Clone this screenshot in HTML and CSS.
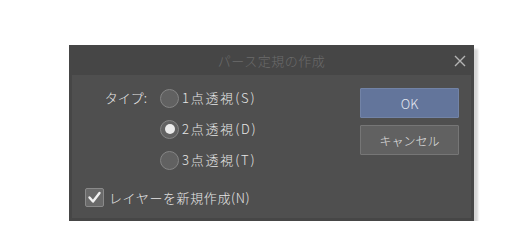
FILE: index.html
```html
<!DOCTYPE html>
<html lang="ja">
<head>
<meta charset="utf-8">
<link rel="stylesheet" href="styles.css">
</head>
<body>
<div class="dialog">
  <div class="titlebar">
    <span class="title">パース定規の作成</span>
    <svg class="close" width="12" height="12" viewBox="0 0 12 12"><path d="M1 1 L11 11 M11 1 L1 11" stroke="#b4b4b4" stroke-width="1.4" fill="none"/></svg>
  </div>
  <div class="content">
    <div class="left">
      <div class="typerow">
        <div class="typelabel">タイプ:</div>
        <div class="radios">
          <div class="radio"><span class="circle"></span><span class="rlabel">1点透視(S)</span></div>
          <div class="radio"><span class="circle checked"></span><span class="rlabel">2点透視(D)</span></div>
          <div class="radio"><span class="circle"></span><span class="rlabel">3点透視(T)</span></div>
        </div>
      </div>
      <div class="check">
        <span class="box"><svg width="15" height="15" viewBox="0 0 15 15"><path d="M2.5 7.5 L6 11.5 L12.5 3" stroke="#f2f2f2" stroke-width="2.4" fill="none" stroke-linecap="round" stroke-linejoin="round"/></svg></span>
        <span class="clabel">レイヤーを新規作成(N)</span>
      </div>
    </div>
    <div class="buttons">
      <div class="btn ok">OK</div>
      <div class="btn cancel">キャンセル</div>
    </div>
  </div>
</div>
</body>
</html>
```
FILE: styles.css
```css
html, body {
  margin: 0;
  padding: 0;
  background: #ffffff;
}
body {
  font-family: "Noto Sans CJK JP", "Noto Sans", sans-serif;
  font-size: 13px;
  font-weight: 300;
  color: #e6e6e6;
}
.dialog {
  margin: 45px 0 0 69px;
  width: 405px;
  height: 176px;
  background: #464646;
  box-shadow: 4px 4px 2px rgba(0,0,0,0.16);
  display: flex;
  flex-direction: column;
}
.titlebar {
  height: 30px;
  flex: none;
  display: flex;
  align-items: center;
  justify-content: center;
  position: relative;
}
.title {
  color: #6b6b6b;
  font-size: 13px;
  letter-spacing: 0.5px;
}
.close {
  position: absolute;
  right: 8px;
  top: 10px;
}
.content {
  flex: 1;
  margin: 0 3px 3px 3px;
  background: #4f4f4f;
  display: flex;
  justify-content: space-between;
  padding: 13px 12px 0 13px;
}
.left {
  display: flex;
  flex-direction: column;
}
.typerow {
  display: flex;
}
.typelabel {
  width: 62px;
  padding-right: 13px;
  text-align: right;
  height: 20px;
  line-height: 20px;
}
.radios {
  display: flex;
  flex-direction: column;
  gap: 11px;
}
.radio {
  display: flex;
  align-items: center;
  gap: 3px;
  height: 20px;
}
.circle {
  width: 17px;
  height: 17px;
  border-radius: 50%;
  border: 1.5px solid #858585;
  background: #616161;
  display: flex;
  align-items: center;
  justify-content: center;
}
.circle.checked::after {
  content: "";
  width: 10px;
  height: 10px;
  border-radius: 50%;
  background: #ebebeb;
}
.rlabel {
  letter-spacing: 1.8px;
  line-height: 20px;
}
.check {
  margin-top: 18px;
  display: flex;
  align-items: center;
  gap: 5px;
}
.box {
  width: 17px;
  height: 17px;
  border: 1px solid #8a8a8a;
  background: #6a6a6a;
  border-radius: 2px;
  display: flex;
  align-items: center;
  justify-content: center;
}
.clabel {
  letter-spacing: 0.6px;
}
.buttons {
  display: flex;
  flex-direction: column;
  gap: 7px;
}
.btn {
  width: 97px;
  height: 28px;
  display: flex;
  align-items: center;
  justify-content: center;
  border-radius: 1px;
  font-size: 12px;
}
.ok {
  background: #63759b;
  border: 1px solid #7283a6;
  color: #e4e8f0;
  font-size: 13px;
}
.cancel {
  background: #616161;
  border: 1px solid #767676;
  color: #e0e0e0;
}
```
